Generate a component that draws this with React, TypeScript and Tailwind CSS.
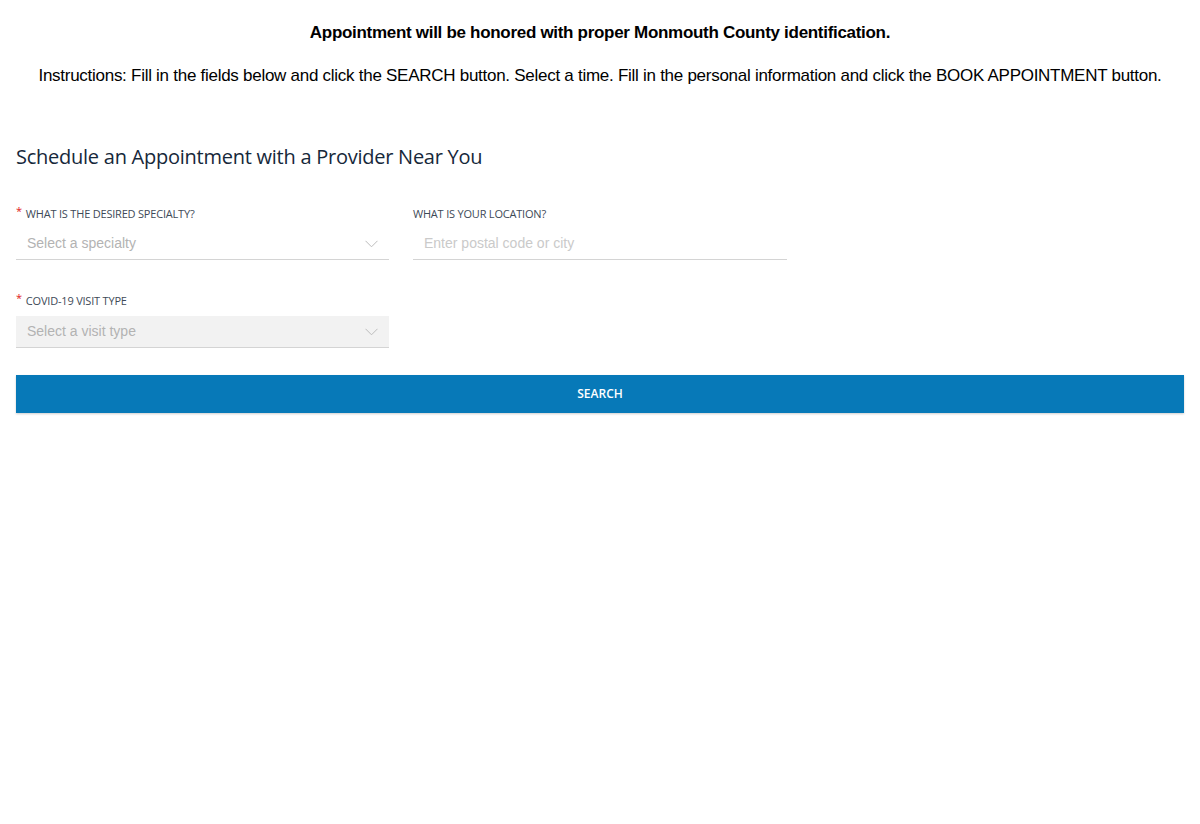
const labelFont = { fontFamily: '"Open Sans", "Noto Sans", sans-serif' };

function Chevron() {
  return (
    <svg width="13" height="8" viewBox="0 0 13 8" fill="none" className="shrink-0">
      <polyline points="0.5,0.8 6.5,6.8 12.5,0.8" stroke="#bcbcbc" strokeWidth="1" />
    </svg>
  );
}

function FieldLabel({ text, required }: { text: string; required?: boolean }) {
  return (
    <div
      className="flex items-start h-[15px] text-[11px] leading-[15px] text-[#3e4a57] tracking-[-0.2px]"
      style={labelFont}
    >
      {required && <span className="text-[#e02020] mr-[4px] text-[11px] leading-[10px]">*</span>}
      <span>{text}</span>
    </div>
  );
}

function SelectBox({ placeholder, filled }: { placeholder: string; filled?: boolean }) {
  return (
    <div
      className={`flex items-center justify-between h-[32px] pl-[11px] pr-[11px] border-b border-[#d4d4d4] ${
        filled ? "bg-[#f2f2f2]" : ""
      }`}
    >
      <span className="text-[14px] text-[#b3b3b3] font-['Liberation_Sans',Arial,sans-serif]">{placeholder}</span>
      <Chevron />
    </div>
  );
}

export default function App() {
  return (
    <div className="w-[1200px] min-h-[824px] bg-white px-[16px]">
      <div className="pt-[21px] text-center text-black font-['Liberation_Sans',Arial,sans-serif]">
        <p className="text-[17px] font-bold leading-[24px] tracking-[-0.3px]">
          Appointment will be honored with proper Monmouth County identification.
        </p>
        <p className="mt-[19px] text-[17px] leading-[24px] tracking-[-0.27px]">
          Instructions: Fill in the fields below and click the SEARCH button. Select a time. Fill in the personal
          information and click the BOOK APPOINTMENT button.
        </p>
      </div>

      <h2 className="mt-[55px] text-[20px] leading-[28px] text-[#16283a] tracking-[-0.25px]" style={labelFont}>
        Schedule an Appointment with a Provider Near You
      </h2>

      <div className="mt-[35px] grid grid-cols-[373px_374px] gap-x-[24px]">
        <div>
          <FieldLabel text="WHAT IS THE DESIRED SPECIALTY?" required />
          <div className="mt-[7px]">
            <SelectBox placeholder="Select a specialty" />
          </div>
        </div>
        <div>
          <FieldLabel text="WHAT IS YOUR LOCATION?" />
          <div className="mt-[7px] flex items-center h-[32px] pl-[11px] border-b border-[#d4d4d4]">
            <span className="text-[14px] text-[#cacaca] font-['Liberation_Sans',Arial,sans-serif]">
              Enter postal code or city
            </span>
          </div>
        </div>
      </div>

      <div className="mt-[33px] w-[373px]">
        <FieldLabel text="COVID-19 VISIT TYPE" required />
        <div className="mt-[8px]">
          <SelectBox placeholder="Select a visit type" filled />
        </div>
      </div>

      <button
        className="mt-[27px] w-full h-[38px] bg-[#0779b8] text-white text-[12px] font-semibold shadow-[0_1px_2px_rgba(0,0,0,0.2)]"
        style={labelFont}
      >
        SEARCH
      </button>
    </div>
  );
}
